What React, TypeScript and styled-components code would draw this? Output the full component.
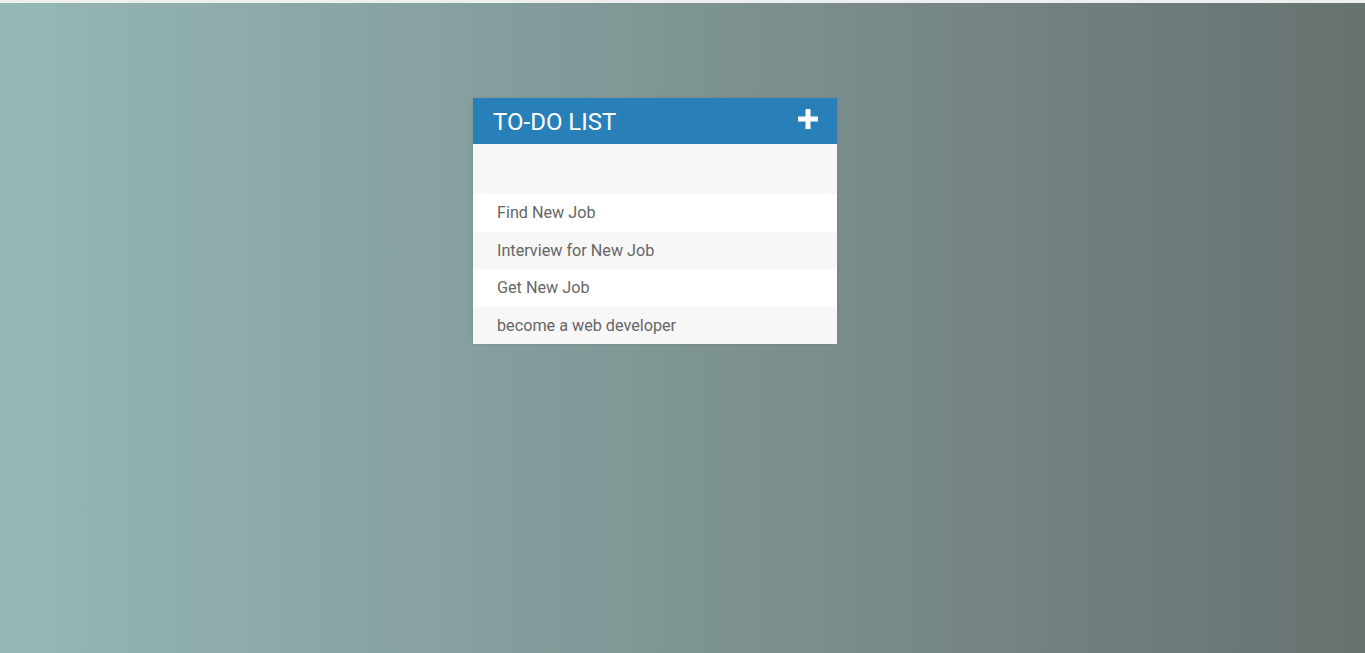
import React from "react";
import styled, { createGlobalStyle } from "styled-components";

const Global = createGlobalStyle`
  html, body { margin: 0; padding: 0; height: 100%; }
  body {
    font-family: Roboto, "Liberation Sans", sans-serif;
    border-top: 3px solid #eef0ef;
    box-sizing: border-box;
    background: linear-gradient(90deg, #95b8b6 0%, #677170 100%);
    min-height: 653px;
  }
`;

const Page = styled.div`
  display: flex;
  justify-content: center;
  padding-top: 95px;
  padding-right: 55px;
`;

const Card = styled.div`
  width: 364px;
  background: #f7f7f7;
  box-shadow: 0 0 3px rgba(0, 0, 0, 0.1);
`;

const Header = styled.div`
  height: 46px;
  background: #2980b9;
  display: flex;
  align-items: center;
  justify-content: space-between;
  padding: 0 19px 0 20px;
  color: #fff;
`;

const Title = styled.h1`
  margin: 0;
  font-size: 24px;
  font-weight: 400;
  text-transform: uppercase;
  letter-spacing: 0;
  padding-top: 1px;
`;

const AddButton = styled.span`
  display: flex;
  width: 20px;
  height: 20px;
  margin-top: -4px;
`;

const InputRow = styled.div`
  height: 50px;
  background: #f7f7f7;
`;

const List = styled.ul`
  list-style: none;
  margin: 0;
  padding: 0;
`;

const Item = styled.li<{ $alt: boolean }>`
  height: 37.6px;
  display: flex;
  align-items: center;
  padding-left: 24px;
  font-size: 16.2px;
  color: #666;
  background: ${(p) => (p.$alt ? "#f7f7f7" : "#fff")};
`;

const items = ["Find New Job", "Interview for New Job", "Get New Job", "become a web developer"];

export default function App() {
  return (
    <>
      <Global />
      <Page>
        <Card>
          <Header>
            <Title>To-Do List</Title>
            <AddButton>
              <svg width="20" height="20" viewBox="0 0 20 20">
                <path d="M7.5 0h5v7.5H20v5h-7.5V20h-5v-7.5H0v-5h7.5z" fill="#fff" />
              </svg>
            </AddButton>
          </Header>
          <InputRow />
          <List>
            {items.map((t, i) => (
              <Item key={t} $alt={i % 2 === 1}>{t}</Item>
            ))}
          </List>
        </Card>
      </Page>
    </>
  );
}
